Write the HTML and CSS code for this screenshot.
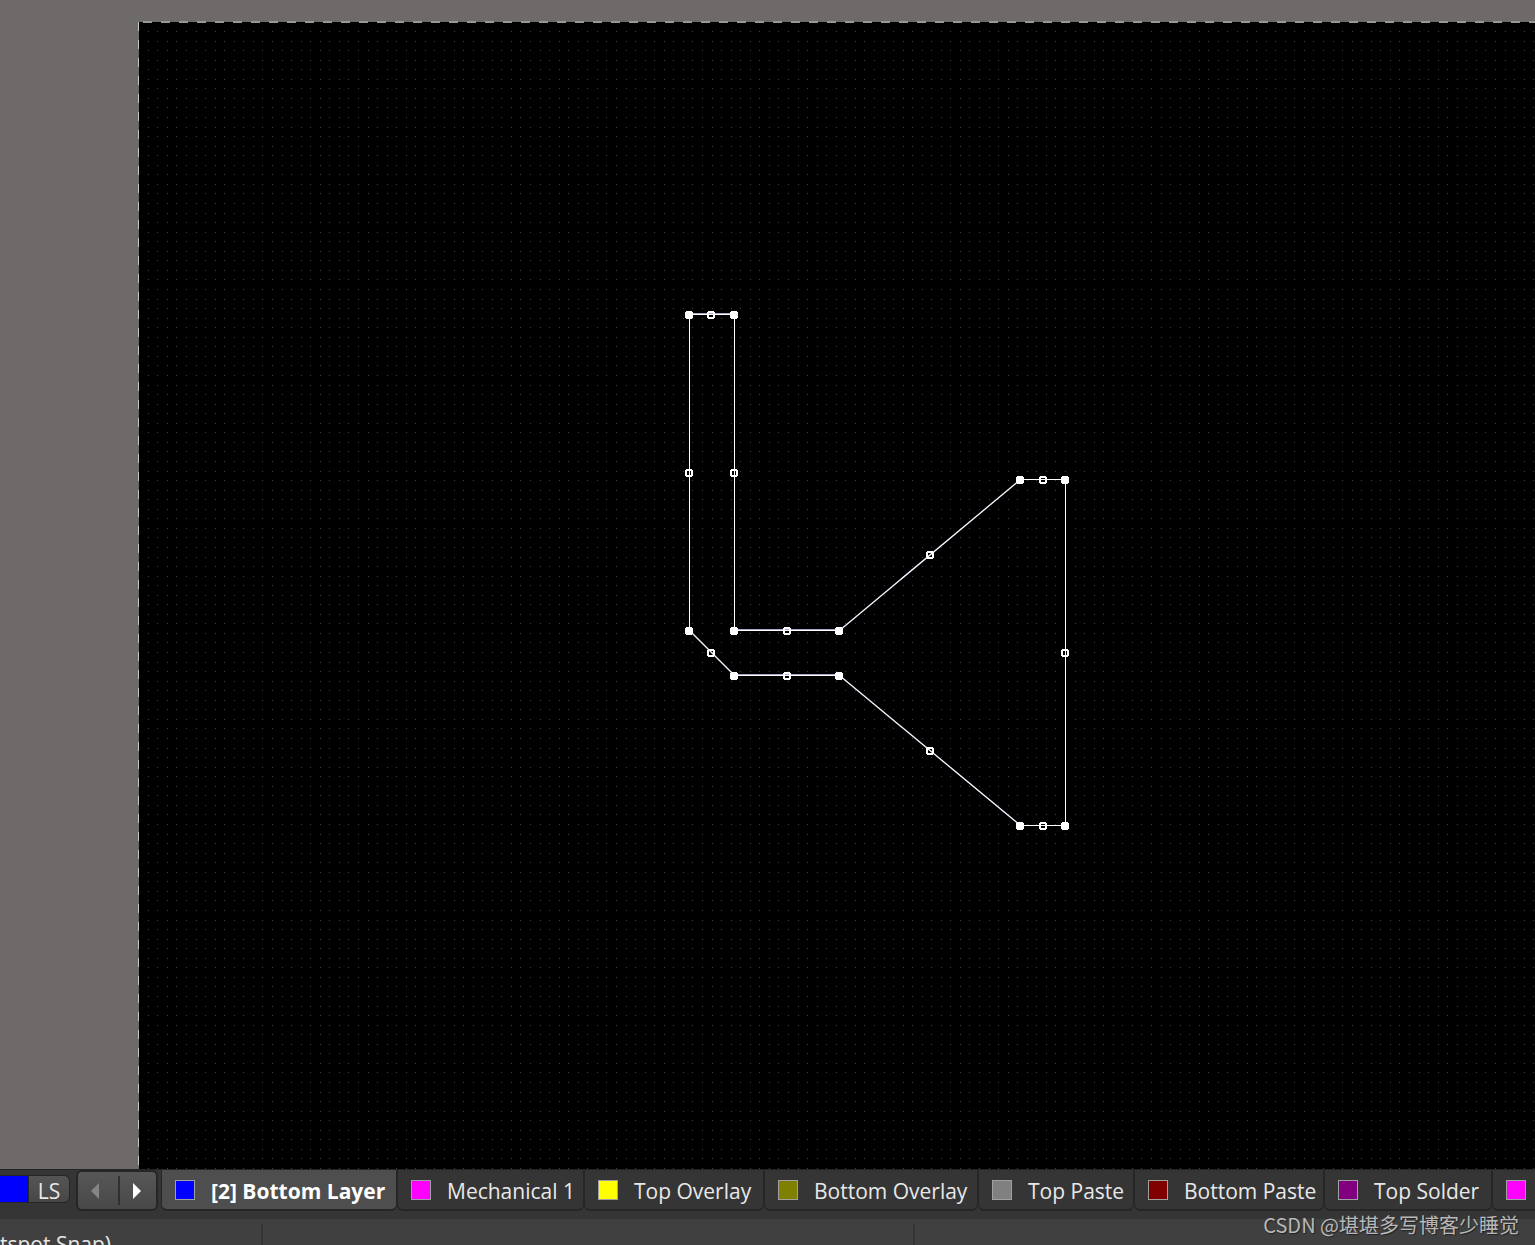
FILE: index.html
```
<!DOCTYPE html>
<html lang="en">
<head>
<meta charset="utf-8">
<title>PCB Editor</title>
<link rel="stylesheet" href="styles.css">
</head>
<body>
<main class="workspace">
  <div class="board">
    <canvas class="grid"></canvas>
    <svg class="region" viewBox="0 0 1396 1147" width="1396" height="1147" role="img" aria-label="Selected copper region">
      <defs>
        <g id="vertex"><path d="M-3-4h6v1h1v6h-1v1h-6v-1h-1v-6h1z" fill="#fff"/></g>
        <g id="mid"><path fill-rule="evenodd" d="M-3-4h6v1h1v6h-1v1h-6v-1h-1v-6h1zM-2-2v4h4v-4z" fill="#fff"/></g>
      </defs>
      <path class="glow" d="M550 291.500H595M595 607.500H700M595 652.500H700"/>
      <path class="outline" d="M550.5 292.500H595.500V608.500H700.500M881.500 457.500H926.500V803.500H881.500M700.500 653.500H595.500M550.500 608.500V292.500"/>
      <path class="outline slanted" d="M700.500 608.500L881.500 457.500M881.500 803.500L700.500 653.500M595.500 653.500L550.500 608.500"/>
      <g>
        <use href="#vertex" x="550" y="293"/><use href="#vertex" x="595" y="293"/>
        <use href="#vertex" x="595" y="609"/><use href="#vertex" x="700" y="609"/>
        <use href="#vertex" x="881" y="458"/><use href="#vertex" x="926" y="458"/>
        <use href="#vertex" x="926" y="804"/><use href="#vertex" x="881" y="804"/>
        <use href="#vertex" x="700" y="654"/><use href="#vertex" x="595" y="654"/>
        <use href="#vertex" x="550" y="609"/>
        <use href="#mid" x="572" y="293"/><use href="#mid" x="595" y="451"/>
        <use href="#mid" x="550" y="451"/><use href="#mid" x="648" y="609"/>
        <use href="#mid" x="791" y="533"/><use href="#mid" x="904" y="458"/>
        <use href="#mid" x="926" y="631"/><use href="#mid" x="904" y="804"/>
        <use href="#mid" x="791" y="729"/><use href="#mid" x="648" y="654"/>
        <use href="#mid" x="572" y="631"/>
      </g>
    </svg>
  </div>
</main>
<nav class="layerbar" aria-label="Layers">
  <button class="layerset"><span class="current blue"></span><span class="ls">LS</span></button>
  <div class="scroller">
    <button class="arrow" aria-label="Previous layers" disabled><svg width="8" height="16"><path d="M8 0v16L0 8z"/></svg></button>
    <button class="arrow" aria-label="Next layers"><svg width="8" height="16"><path d="M0 0v16L8 8z"/></svg></button>
  </div>
  <div class="tabs">
    <button class="tab active bottom-layer"><span class="swatch blue"></span><span class="name">[2] Bottom Layer</span></button>
    <button class="tab mechanical"><span class="swatch magenta"></span><span class="name">Mechanical 1</span></button>
    <button class="tab top-overlay"><span class="swatch yellow"></span><span class="name">Top Overlay</span></button>
    <button class="tab bottom-overlay"><span class="swatch olive"></span><span class="name">Bottom Overlay</span></button>
    <button class="tab top-paste"><span class="swatch gray"></span><span class="name">Top Paste</span></button>
    <button class="tab bottom-paste"><span class="swatch maroon"></span><span class="name">Bottom Paste</span></button>
    <button class="tab top-solder"><span class="swatch purple"></span><span class="name">Top Solder</span></button>
    <button class="tab bottom-solder" aria-label="Bottom Solder"><span class="swatch magenta"></span></button>
  </div>
</nav>
<footer class="status">
  <div class="cell snap">tspot Snap)</div>
  <div class="cell info"></div>
  <div class="watermark">CSDN @堪堪多写博客少睡觉</div>
</footer>
<script src="grid.js"></script>
</body>
</html>
```
FILE: styles.css
```
* { box-sizing: border-box; }

body {
  margin: 0;
  height: 100vh;
  display: flex;
  flex-direction: column;
  overflow: hidden;
  background: #404040;
  color: #e8e8e8;
  font: 21px/28px "Open Sans", "Noto Sans", sans-serif;
}

button {
  margin: 0;
  padding: 0;
  border: 0;
  background: none;
  color: inherit;
  font: inherit;
}

.workspace {
  flex: 1;
  min-height: 0;
  display: flex;
  padding: 22px 0 0 139px;
  background: #6e6a69;
}

.board {
  position: relative;
  flex: 1;
  min-width: 0;
  background: #000;
}

/* dashed sheet border along the top and left edges */
.board::before,
.board::after {
  content: "";
  position: absolute;
}

.board::before {
  left: 0;
  right: 0;
  top: -1px;
  height: 2px;
  background: repeating-linear-gradient(90deg, transparent 0 4px, #989797 4px 13px, transparent 13px 18px);
}

.board::after {
  left: -1px;
  top: 0;
  bottom: 0;
  width: 1px;
  background: repeating-linear-gradient(180deg, #c4c4c4 0 9px, #6e6a69 9px 18px);
}

.grid,
.region {
  position: absolute;
  left: 0;
  top: 0;
}

.outline {
  fill: none;
  stroke: #fff;
  stroke-width: 1;
}

.slanted {
  stroke: #f4f2ff;
  stroke-width: 1.4;
}

.glow {
  stroke: #a8a8d0;
}

.layerbar {
  display: flex;
  height: 50px;
  flex: none;
  background: #353535;
  border-top: 1px solid #242424;
}

.layerset {
  display: flex;
  width: 70px;
  height: 28px;
  margin: 5px 6px 0 0;
  border: 1px solid #262626;
  border-left: 0;
  border-radius: 0 6px 6px 0;
  background: linear-gradient(#555, #474747);
  overflow: hidden;
}

.current {
  width: 29px;
  height: 26px;
  border-right: 1px solid #262626;
}

.ls {
  flex: 1;
  padding-top: 1px;
  text-align: center;
}

.scroller {
  display: flex;
  width: 82px;
  height: 41px;
  margin-right: 3px;
  border: 2px solid #262626;
  border-radius: 6px;
  background: linear-gradient(#575757, #484848);
}

.arrow {
  flex: 1;
  display: flex;
  align-items: center;
  justify-content: center;
  padding-right: 6px;
  fill: #fff;
}

.arrow + .arrow {
  border-left: 2px solid #303030;
  margin: 4px 0;
  padding-right: 2px;
}

.arrow:disabled { fill: #858585; }

.tabs {
  display: flex;
  flex: 1;
  min-width: 0;
  overflow: hidden;
}

.tab {
  flex: none;
  display: flex;
  align-items: center;
  gap: 16px;
  height: 41px;
  padding: 0 0 0 13px;
  border: solid #262626;
  border-width: 0 1px 2px;
  border-radius: 0 0 6px 6px;
  white-space: nowrap;
}

.name { padding-top: 2px; }

.tab.active {
  background: #4e4e4e;
  color: #fff;
  font-weight: 700;
}

.bottom-layer { width: 236px; }
.mechanical { width: 187px; }
.top-overlay { width: 180px; }
.bottom-overlay { width: 214px; }
.top-paste { width: 156px; }
.bottom-paste { width: 190px; }
.top-solder { width: 168px; }
.bottom-solder { width: 214px; }

.swatch {
  width: 20px;
  height: 20px;
  border: 1px solid #a0a0a0;
}

.blue { background: #0000ff; }
.magenta { background: #ff00ff; }
.yellow { background: #ffff00; }
.olive { background: #808000; }
.gray { background: #808080; }
.maroon { background: #800000; }
.purple { background: #800080; }

.status {
  position: relative;
  display: flex;
  flex: none;
  height: 26px;
  padding-top: 5px;
}

.cell {
  height: 21px;
  border-right: 2px solid #353535;
  white-space: nowrap;
}

.snap { width: 263px; padding-top: 6px; }
.info { width: 652px; }

.watermark {
  position: absolute;
  right: 16px;
  bottom: 6px;
  color: #b8b8b8;
  font: 20px/28px "Noto Sans CJK SC", sans-serif;
  text-shadow: 1px 1px 1px #222;
}
```
FILE: grid.js
```
// Draws the snap grid as single-pixel dots over the whole board.
const canvas = document.querySelector(".grid");
const board = canvas.parentElement;
const PITCH = 9.5546;

function drawGrid() {
  canvas.width = board.clientWidth;
  canvas.height = board.clientHeight;
  const ctx = canvas.getContext("2d");
  ctx.fillStyle = "#424242";
  for (let y = 9.5; y < canvas.height; y += PITCH) {
    for (let x = 9.3; x < canvas.width; x += PITCH) {
      ctx.fillRect(Math.floor(x), Math.floor(y), 1, 1);
    }
  }
}

drawGrid();
window.addEventListener("resize", drawGrid);
```
